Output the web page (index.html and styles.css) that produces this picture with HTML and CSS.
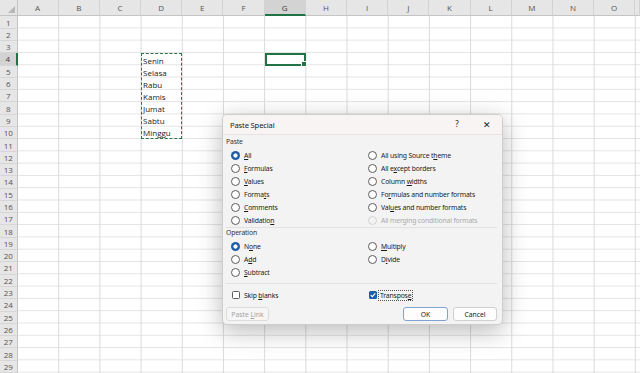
FILE: index.html
```html
<!DOCTYPE html>
<html lang="en">
<head>
  <meta charset="UTF-8" />
  <title>Paste Special</title>
  <link rel="stylesheet" href="styles.css">
</head>
<body>

<!-- Worksheet -->
<div class="sheet">
  <div class="corner"></div>
  <div class="ch">A</div>
  <div class="ch">B</div>
  <div class="ch">C</div>
  <div class="ch">D</div>
  <div class="ch">E</div>
  <div class="ch">F</div>
  <div class="ch active">G</div>
  <div class="ch">H</div>
  <div class="ch">I</div>
  <div class="ch">J</div>
  <div class="ch">K</div>
  <div class="ch">L</div>
  <div class="ch">M</div>
  <div class="ch">N</div>
  <div class="ch">O</div>
  <div class="ch"></div>

  <div class="cells"></div>

  <div class="rh">1</div>
  <div class="rh">2</div>
  <div class="rh">3</div>
  <div class="rh active">4</div>
  <div class="rh">5</div>
  <div class="rh">6</div>
  <div class="rh">7</div>
  <div class="rh">8</div>
  <div class="rh">9</div>
  <div class="rh">10</div>
  <div class="rh">11</div>
  <div class="rh">12</div>
  <div class="rh">13</div>
  <div class="rh">14</div>
  <div class="rh">15</div>
  <div class="rh">16</div>
  <div class="rh">17</div>
  <div class="rh">18</div>
  <div class="rh">19</div>
  <div class="rh">20</div>
  <div class="rh">21</div>
  <div class="rh">22</div>
  <div class="rh">23</div>
  <div class="rh">24</div>
  <div class="rh">25</div>
  <div class="rh">26</div>
  <div class="rh">27</div>
  <div class="rh">28</div>
  <div class="rh">29</div>

  <!-- copied range D4:D10 -->
  <div class="copied">
    <div>Senin</div>
    <div>Selasa</div>
    <div>Rabu</div>
    <div>Kamis</div>
    <div>Jumat</div>
    <div>Sabtu</div>
    <div>Minggu</div>
  </div>

  <!-- active cell G4 -->
  <div class="selected"></div>
</div>

<!-- Dialog -->
<div class="dialog">
  <div class="dialog-title">
    <span>Paste Special</span>
    <span class="title-btns">
      <span class="tbtn">?</span>
      <span class="tbtn close">&#x2715;</span>
    </span>
  </div>

  <div class="dialog-body">
    <div class="group-label">Paste</div>
    <div class="options">
      <div class="opt"><span class="radio on"></span><span><u>A</u>ll</span></div>
      <div class="opt"><span class="radio"></span><span>All using Source t<u>h</u>eme</span></div>
      <div class="opt"><span class="radio"></span><span><u>F</u>ormulas</span></div>
      <div class="opt"><span class="radio"></span><span>All e<u>x</u>cept borders</span></div>
      <div class="opt"><span class="radio"></span><span><u>V</u>alues</span></div>
      <div class="opt"><span class="radio"></span><span>Column <u>w</u>idths</span></div>
      <div class="opt"><span class="radio"></span><span>Forma<u>t</u>s</span></div>
      <div class="opt"><span class="radio"></span><span>Fo<u>r</u>mulas and number formats</span></div>
      <div class="opt"><span class="radio"></span><span><u>C</u>omments</span></div>
      <div class="opt"><span class="radio"></span><span>Val<u>u</u>es and number formats</span></div>
      <div class="opt"><span class="radio"></span><span>Validatio<u>n</u></span></div>
      <div class="opt off"><span class="radio"></span><span>All merging conditional formats</span></div>
    </div>

    <div class="sep"></div>

    <div class="group-label">Operation</div>
    <div class="options ops">
      <div class="opt"><span class="radio on"></span><span>N<u>o</u>ne</span></div>
      <div class="opt"><span class="radio"></span><span><u>M</u>ultiply</span></div>
      <div class="opt"><span class="radio"></span><span>A<u>d</u>d</span></div>
      <div class="opt"><span class="radio"></span><span>D<u>i</u>vide</span></div>
      <div class="opt"><span class="radio"></span><span><u>S</u>ubtract</span></div>
    </div>

    <div class="sep sep-low"></div>

    <div class="options checks">
      <div class="opt"><span class="check"></span><span>Skip <u>b</u>lanks</span></div>
      <div class="opt">
        <span class="check on">
          <svg viewBox="0 0 8 8" width="8" height="8"><path d="M1.8 4.2 L3.3 5.7 L6.3 2.4" fill="none" stroke="#fff" stroke-width="1.1"/></svg>
        </span>
        <span class="focus">Transpos<u>e</u></span>
      </div>
    </div>

    <div class="buttons">
      <button class="btn disabled">Paste <u>L</u>ink</button>
      <button class="btn default">OK</button>
      <button class="btn">Cancel</button>
    </div>
  </div>
</div>

</body>
</html>
```

FILE: styles.css
```css
* {
  margin: 0;
  padding: 0;
  box-sizing: border-box;
}

body {
  width: 640px;
  height: 373px;
  overflow: hidden;
  position: relative;
  background: #fff;
  font-family: "Open Sans", "Noto Sans", sans-serif;
}

/* Worksheet grid */
.sheet {
  display: grid;
  grid-template-columns: 17.5px repeat(15, 41.2px) 1fr;
  grid-template-rows: 16.4px repeat(29, 12.3px);
  width: 640px;
}

.corner {
  background: #e6e6e6;
  border-right: 1px solid #c4c4c4;
  border-bottom: 1px solid #c4c4c4;
  position: relative;
}

.corner::after {
  content: "";
  position: absolute;
  right: 2px;
  bottom: 2px;
  border-left: 7px solid transparent;
  border-bottom: 7px solid #b7b7b7;
}

.ch {
  background: #e6e6e6;
  border-right: 1px solid #d2d2d2;
  border-bottom: 1px solid #c4c4c4;
  display: flex;
  align-items: center;
  justify-content: center;
  font-size: 8px;
  color: #555;
}

.ch.active {
  background: #d3d3d3;
  border-bottom: 2px solid #217346;
  color: #3b3b3b;
}

.rh {
  background: #e6e6e6;
  border-right: 1px solid #c4c4c4;
  border-bottom: 1px solid #d6d6d6;
  display: flex;
  align-items: center;
  justify-content: center;
  font-size: 8px;
  color: #555;
}

.rh.active {
  background: #d3d3d3;
  border-right: 2px solid #217346;
  color: #3b3b3b;
}

.cells {
  grid-column: 2 / -1;
  grid-row: 2 / -1;
  background-image:
    linear-gradient(to left, #dadada 1px, transparent 1px),
    linear-gradient(to top, #e3e3e3 1px, transparent 1px);
  background-size: 41.2px 12.3px, 41.2px 12.3px;
}

.copied {
  grid-column: 5;
  grid-row: 5 / span 7;
  border: 1.5px dashed #2a7548;
  display: grid;
  grid-template-rows: repeat(7, 1fr);
  padding-left: 1px;
  font-size: 8px;
  color: #1a1a1a;
}

.copied div {
  display: flex;
  align-items: center;
}

.selected {
  grid-column: 8;
  grid-row: 5;
  border: 2px solid #217346;
  position: relative;
}

.selected::after {
  content: "";
  position: absolute;
  right: -3px;
  bottom: -3px;
  width: 4px;
  height: 4px;
  background: #217346;
  border: 1px solid #fff;
}

/* Paste Special dialog */
.dialog {
  position: absolute;
  left: 222px;
  top: 114px;
  width: 281px;
  height: 211px;
  background: #f3f3f3;
  border: 1px solid #cdcdcd;
  border-radius: 5px;
  box-shadow: 0 6px 24px rgba(0,0,0,0.28);
  font-family: "Noto Sans", "Open Sans", sans-serif;
  font-size: 6.8px;
  letter-spacing: -0.15px;
  color: #1b1b1b;
  overflow: hidden;
}

.dialog-title {
  height: 20px;
  background: #f8f4f3;
  border-bottom: 1px solid #e8e3e2;
  display: flex;
  align-items: center;
  padding-left: 7px;
  font-size: 7.6px;
  color: #1a1a1a;
}

.title-btns {
  margin-left: auto;
  display: flex;
}

.tbtn {
  width: 30px;
  text-align: center;
  font-size: 8px;
}

.tbtn.close {
  font-size: 9px;
}

.dialog-body {
  padding: 2px 5px 0 3px;
}

.group-label {
  height: 10px;
  line-height: 10px;
  color: #333;
}

.options {
  display: grid;
  grid-template-columns: 137px 1fr;
  grid-auto-rows: 12.85px;
  padding-left: 4.5px;
  margin-top: 2.5px;
}

.ops {
  margin-top: 2px;
}

.opt {
  display: flex;
  align-items: center;
  gap: 4.5px;
  white-space: nowrap;
}

.opt u {
  text-decoration-thickness: 0.5px;
  text-underline-offset: 1px;
}

.radio {
  width: 9px;
  height: 9px;
  flex: none;
  border: 1px solid #5c5c5c;
  border-radius: 50%;
  background: #fff;
}

.radio.on {
  border: none;
  background: radial-gradient(circle, #fff 0 1.8px, #1f5ea8 2.4px);
}

.opt.off {
  color: #a9a9a9;
}

.opt.off .radio {
  border-color: #d2d2d2;
  background: #f3f3f3;
}

.sep {
  height: 1px;
  background: #e2e2e2;
  margin-top: 0.4px;
}

.sep-low {
  margin-top: 4.5px;
}

.checks {
  margin-top: 5.5px;
  grid-auto-rows: 12px;
}

.check {
  width: 8px;
  height: 8px;
  flex: none;
  border: 1px solid #5c5c5c;
  border-radius: 1.5px;
  background: #fff;
  margin-left: 1px;
}

.check.on {
  border: none;
  background: #1f5ea8;
}

.check svg {
  display: block;
}

.focus {
  outline: 1px dotted #555;
  padding: 0 1px;
  margin-left: -2px;
}

.buttons {
  display: flex;
  gap: 5px;
  margin-top: 6px;
}

.btn {
  height: 14px;
  width: 44px;
  font-family: inherit;
  font-size: 6.8px;
  color: #1b1b1b;
  background: #fdfdfd;
  border: 1px solid #d0d0d0;
  border-radius: 3px;
}

.btn.disabled {
  width: 43px;
  color: #a3a3a3;
  background: #f6f6f6;
  border-color: #dcdcdc;
}

.btn.default {
  margin-left: auto;
  width: 45px;
  border-color: #7fa3d3;
}
```
